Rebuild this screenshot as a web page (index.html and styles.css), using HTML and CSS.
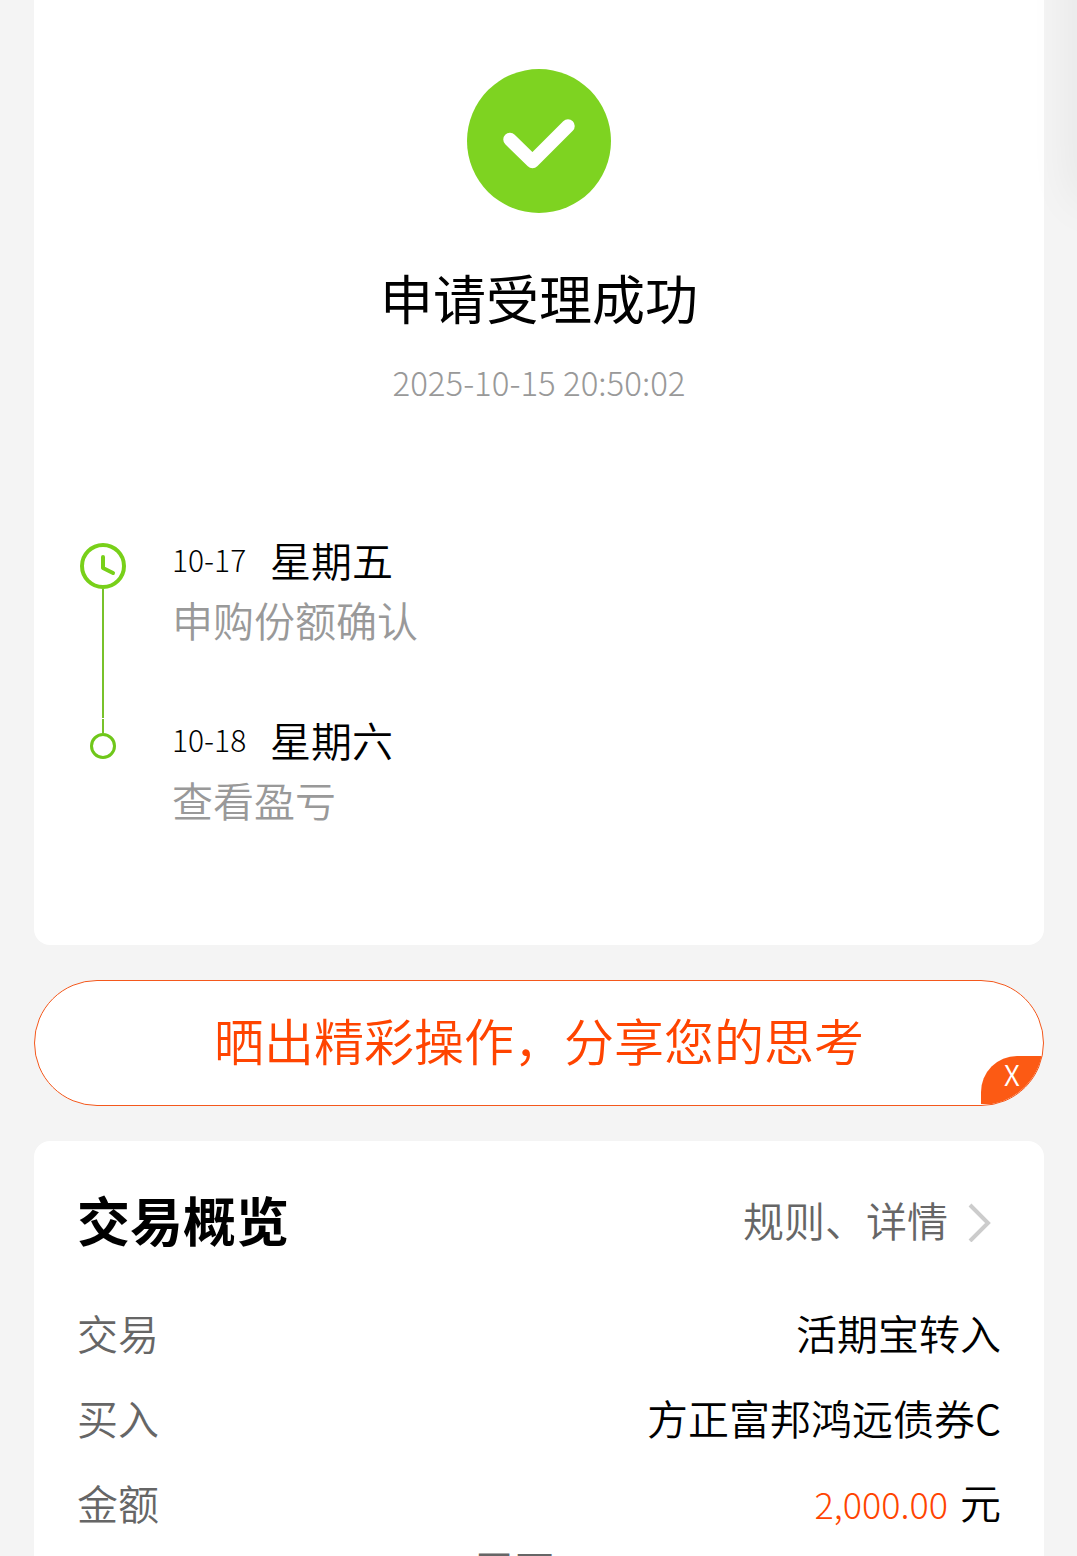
FILE: index.html
```
<!DOCTYPE html>
<html lang="zh-CN">
<head>
  <meta charset="UTF-8">
  <meta name="viewport" content="width=device-width, initial-scale=1">
  <title>申请受理成功</title>
  <link rel="stylesheet" href="styles.css">
</head>
<body>
  <main class="page">
    <section class="card result">
      <svg class="result-icon" viewBox="0 0 144 144" aria-hidden="true">
        <circle cx="72" cy="72" r="72" fill="#7ed321"/>
        <path d="M43 70.500L65.500 92.500L101 57" fill="none" stroke="#fff" stroke-width="13.500" stroke-linecap="round" stroke-linejoin="round"/>
      </svg>
      <h1>申请受理成功</h1>
      <time class="result-time">2025-10-15 20:50:02</time>

      <ol class="timeline">
        <li>
          <div class="marker">
            <svg class="clock" viewBox="0 0 46 46" aria-hidden="true">
              <circle cx="23" cy="23" r="21" fill="none" stroke="#78d019" stroke-width="4"/>
              <path d="M23 14V25L33 30" fill="none" stroke="#78d019" stroke-width="4" stroke-linecap="round" stroke-linejoin="round"/>
            </svg>
            <span class="line"></span>
          </div>
          <div class="step">
            <p class="day"><span class="date">10-17</span><span>星期五</span></p>
            <p class="desc">申购份额确认</p>
          </div>
        </li>
        <li>
          <div class="marker last">
            <span class="line"></span>
            <span class="dot"></span>
          </div>
          <div class="step">
            <p class="day"><span class="date">10-18</span><span>星期六</span></p>
            <p class="desc">查看盈亏</p>
          </div>
        </li>
      </ol>
    </section>

    <div class="share">
      <a href="#share">晒出精彩操作，分享您的思考</a>
      <button class="share-close" type="button" aria-label="关闭">X</button>
    </div>

    <section class="card overview">
      <header>
        <h2>交易概览</h2>
        <a class="more" href="#rules">规则、详情
          <svg viewBox="0 0 24 46" aria-hidden="true"><path d="M2 9L20 27L2 45" fill="none" stroke="#ccc" stroke-width="4"/></svg>
        </a>
      </header>
      <dl>
        <div class="row"><dt>交易</dt><dd>活期宝转入</dd></div>
        <div class="row"><dt>买入</dt><dd>方正富邦鸿远债券C</dd></div>
        <div class="row"><dt>金额</dt><dd><span class="amount">2,000.00</span>元</dd></div>
      </dl>
      <button class="expand" type="button">展开
        <svg viewBox="0 0 40 24" aria-hidden="true"><path d="M3 2L20 20L37 2" fill="none" stroke="#ccc" stroke-width="4"/></svg>
      </button>
    </section>
  </main>
</body>
</html>
```
FILE: styles.css
```
* {
  box-sizing: border-box;
}
body, h1, h2, p, ol, dl, dd {
  margin: 0;
  padding: 0;
}
body {
  height: 100vh;
  overflow: hidden;
  background: #f4f4f4;
  color: #000;
  font-family: "Noto Sans CJK SC", sans-serif;
  font-size: 41px;
  font-weight: 350;
  line-height: 48px;
}
/* soft shadow of the panel beyond the right edge */
body::after {
  content: "";
  position: absolute;
  top: -60px;
  left: 100%;
  width: 40px;
  height: 260px;
  box-shadow: 0 0 50px rgba(0, 0, 0, 0.08);
}
a {
  color: inherit;
  text-decoration: none;
}
button {
  border: 0;
  padding: 0;
  background: none;
  font: inherit;
  color: inherit;
  cursor: pointer;
}
.page {
  display: flex;
  flex-direction: column;
  gap: 35px;
  padding: 0 33px 35px 34px;
}
.card {
  background: #fff;
  border-radius: 16px;
}

.result {
  display: flex;
  flex-direction: column;
  align-items: center;
  padding: 69px 44px 47px;
  border-radius: 0 0 16px 16px;
}
.result-icon {
  width: 144px;
  height: 144px;
}
.result h1 {
  margin-top: 48px;
  font-size: 53px;
  font-weight: 400;
  line-height: 72px;
}
.result-time {
  margin-top: 25px;
  color: #999;
  font-size: 33px;
  font-weight: 300;
}

.timeline {
  align-self: stretch;
  margin-top: 132px;
  list-style: none;
}
.timeline li {
  display: flex;
  gap: 44px;
  height: 180px;
}
.marker {
  display: flex;
  flex-direction: column;
  align-items: center;
  width: 50px;
  padding-top: 5px;
}
.clock {
  width: 46px;
  height: 46px;
}
.line {
  flex: 1;
  width: 2px;
  background: #78c22b;
}
.marker.last {
  padding-top: 1px;
}
.marker.last .line {
  flex: none;
  height: 14px;
}
.dot {
  width: 26px;
  height: 26px;
  border: 3px solid #6fc71a;
  border-radius: 50%;
}
.step {
  display: flex;
  flex-direction: column;
  gap: 12px;
  margin-top: -3px;
}
.day {
  display: flex;
}
.date {
  width: 98px;
  font-size: 30px;
  font-weight: 300;
}
.desc {
  color: #999;
}

.share {
  position: relative;
  overflow: hidden;
  border: 1px solid #f4581c;
  border-radius: 63px;
  background: #fff;
  color: #ff4400;
  font-size: 50px;
  line-height: 116px;
  text-align: center;
  padding-bottom: 8px;
}
.share a {
  display: block;
}
.share-close {
  position: absolute;
  right: 0;
  bottom: 1px;
  width: 62px;
  height: 48px;
  padding-bottom: 12px;
  border-radius: 36px 0 0 0;
  background: #fc5a14;
  color: #fff;
  font-size: 28px;
  line-height: 36px;
}

.overview {
  padding: 41px 43px 40px;
}
.overview header {
  display: flex;
  justify-content: space-between;
  align-items: center;
  margin-bottom: 33px;
}
.overview h2 {
  font-size: 53px;
  font-weight: 700;
  line-height: 74px;
}
.more {
  display: flex;
  align-items: center;
  gap: 20px;
  padding-right: 9px;
  color: #666;
}
.more svg {
  width: 24px;
  height: 46px;
}
.row {
  display: flex;
  justify-content: space-between;
  align-items: center;
  height: 85px;
}
.row dt {
  color: #666;
}
.amount {
  margin-right: 12px;
  color: #ff4400;
  font-size: 36px;
  font-weight: 300;
}
.expand {
  display: flex;
  align-items: center;
  gap: 10px;
  margin: 0 auto;
  color: #666;
}
.expand svg {
  width: 40px;
  height: 24px;
}
```
